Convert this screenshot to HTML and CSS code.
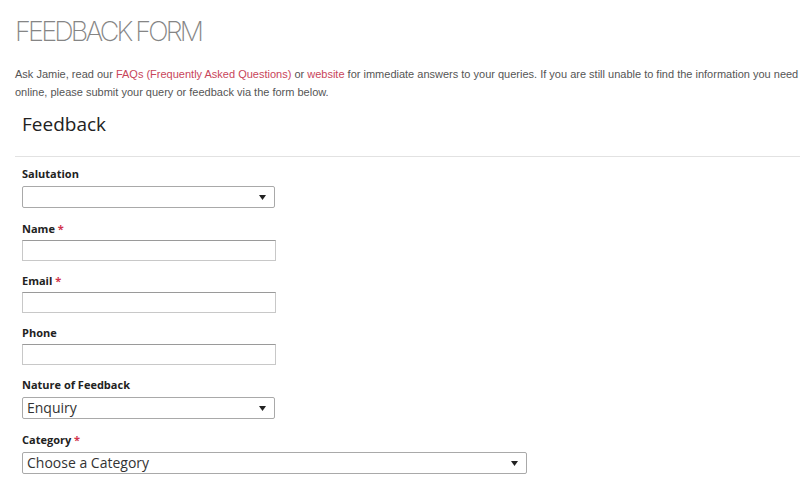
FILE: index.html
```html
<!DOCTYPE html>
<html lang="en">
<head>
<meta charset="utf-8">
<title>Feedback Form</title>
<link rel="stylesheet" href="styles.css">
</head>
<body>
<div class="page">
  <h1 class="title">FEEDBACK FORM</h1>
  <p class="intro">Ask Jamie, read our <a href="#">FAQs (Frequently Asked Questions)</a> or <a href="#">website</a> for immediate answers to your queries. If you are still unable to find the information you need online, please submit your query or feedback via the form below.</p>
  <h2 class="form-title">Feedback</h2>
  <hr class="rule">
  <form class="form">
    <div class="field">
      <label class="label">Salutation</label>
      <div class="select">
        <span class="select-text"></span>
        <svg class="arrow" width="7" height="5" viewBox="0 0 7 5"><path d="M0 0H7L3.5 5Z" fill="#222"/></svg>
      </div>
    </div>
    <div class="field">
      <label class="label">Name <span class="req">*</span></label>
      <input class="input" type="text">
    </div>
    <div class="field">
      <label class="label">Email <span class="req">*</span></label>
      <input class="input" type="text">
    </div>
    <div class="field">
      <label class="label">Phone</label>
      <input class="input" type="text">
    </div>
    <div class="field">
      <label class="label">Nature of Feedback</label>
      <div class="select">
        <span class="select-text">Enquiry</span>
        <svg class="arrow" width="7" height="5" viewBox="0 0 7 5"><path d="M0 0H7L3.5 5Z" fill="#222"/></svg>
      </div>
    </div>
    <div class="field">
      <label class="label">Category <span class="req">*</span></label>
      <div class="select select-wide">
        <span class="select-text">Choose a Category</span>
        <svg class="arrow" width="7" height="5" viewBox="0 0 7 5"><path d="M0 0H7L3.5 5Z" fill="#222"/></svg>
      </div>
    </div>
  </form>
</div>
</body>
</html>
```
FILE: styles.css
```css
* { box-sizing: border-box; }
html, body { margin: 0; padding: 0; background: #fff; }
body { overflow: hidden; }

.page { width: 800px; }

.title {
  margin: 0;
  padding: 17px 0 0 15px;
  font-family: Inter, "Liberation Sans", sans-serif;
  font-weight: 200;
  font-size: 27px;
  line-height: 30px;
  letter-spacing: -2.8px;
  color: #858585;
}

.intro {
  margin: 18px 0 0;
  padding: 0 0 0 15px;
  font-family: "Liberation Sans", Arial, sans-serif;
  font-size: 11px;
  line-height: 18px;
  color: #555;
}
.intro a { color: #c8455a; text-decoration: none; }

.form-title {
  margin: 11px 0 0;
  padding-left: 22px;
  font-family: "Open Sans", "Noto Sans", sans-serif;
  font-weight: 400;
  font-size: 19px;
  line-height: 24px;
  color: #222;
}

.rule {
  margin: 20px 0 0 15px;
  border: 0;
  border-top: 1px solid #e2e2e2;
  height: 0;
}

.form {
  padding: 9px 0 0 22px;
  display: flex;
  flex-direction: column;
  gap: 12px;
}

.field { display: flex; flex-direction: column; }

.label {
  font-family: "Open Sans", "Noto Sans", sans-serif;
  font-weight: 700;
  font-size: 11px;
  line-height: 16px;
  color: #222;
  margin-bottom: 3px;
}
.req { color: #d2334c; }

.select {
  width: 253px;
  height: 22px;
  margin-top: 1px;
  margin-bottom: 1px;
  border: 1px solid #a9a9a9;
  border-radius: 2px;
  background: #fff;
  display: flex;
  align-items: center;
  justify-content: space-between;
  padding: 0 8px 0 4px;
  font-family: "Open Sans", "Noto Sans", sans-serif;
  font-size: 14px;
  color: #333;
}
.select-wide { width: 505px; }
.select-text { line-height: 20px; }
.arrow { flex: none; }

.input {
  width: 254px;
  height: 21px;
  margin: 0;
  border: 1px solid #c8c8c8;
  border-top-color: #9a9a9a;
  border-radius: 0;
  background: #fff;
  padding: 0 4px;
  font-family: "Open Sans", sans-serif;
  font-size: 13px;
}
```
